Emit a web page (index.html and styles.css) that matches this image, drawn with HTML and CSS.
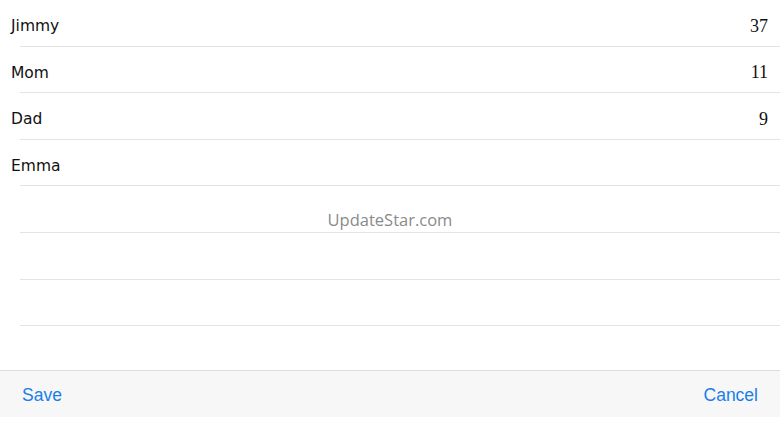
FILE: index.html
```html
<!DOCTYPE html>
<html>
<head>
<meta charset="utf-8">
<link rel="stylesheet" href="styles.css">
</head>
<body>
<div class="screen">
  <div class="list">
    <div class="row"><span class="name">Jimmy</span><span class="num">37</span></div>
    <div class="row"><span class="name">Mom</span><span class="num">11</span></div>
    <div class="row"><span class="name">Dad</span><span class="num">9</span></div>
    <div class="row"><span class="name">Emma</span><span class="num"></span></div>
    <div class="row"></div>
    <div class="row"></div>
    <div class="row"></div>
    <div class="watermark">UpdateStar.com</div>
  </div>
  <div class="toolbar">
    <span class="btn">Save</span>
    <span class="btn">Cancel</span>
  </div>
</div>
</body>
</html>
```
FILE: styles.css
```css
html, body {
  margin: 0;
  padding: 0;
  background: #ffffff;
}
.screen {
  width: 780px;
  height: 439px;
  display: flex;
  flex-direction: column;
}
.list {
  position: relative;
  height: 370px;
  display: flex;
  flex-direction: column;
}
.row {
  height: 46.6px;
  box-sizing: border-box;
  margin-left: 20px;
  padding-left: 0;
  padding-right: 12px;
  border-bottom: 1px solid #e3e3e3;
  display: flex;
  align-items: center;
  justify-content: space-between;
  flex-shrink: 0;
}
.name {
  margin-left: -9px;
  margin-top: 7px;
  font-family: "DejaVu Sans", sans-serif;
  font-size: 15.5px;
  color: #111;
}
.num {
  margin-top: 7px;
  font-family: "Liberation Serif", serif;
  font-size: 18px;
  color: #111;
}
.watermark {
  position: absolute;
  left: 0;
  right: 0;
  top: 208px;
  text-align: center;
  font-family: "Open Sans", sans-serif;
  font-size: 16.5px;
  color: #8a8a8a;
}
.toolbar {
  height: 47px;
  box-sizing: border-box;
  background: #f7f7f7;
  border-top: 1px solid #dcdcdc;
  display: flex;
  align-items: center;
  justify-content: space-between;
  padding: 3px 22px 0 22px;
}
.btn {
  font-family: "Liberation Sans", sans-serif;
  font-size: 17.5px;
  color: #1a7ee8;
}
```
